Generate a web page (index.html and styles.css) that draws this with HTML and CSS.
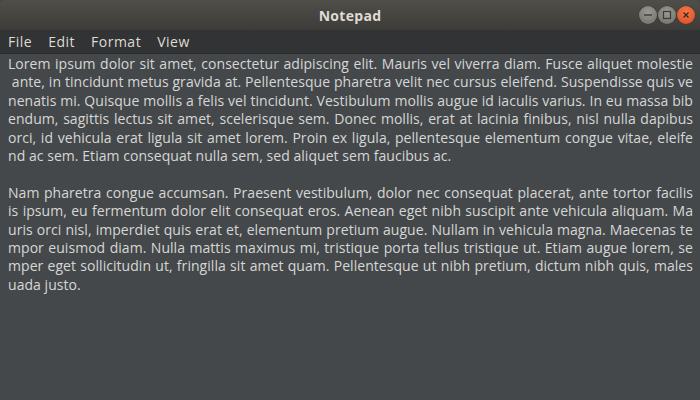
FILE: index.html
```html
<!DOCTYPE html>
<html>
<head>
<meta charset="utf-8">
<link rel="stylesheet" href="styles.css">
</head>
<body>
<div class="window">
  <div class="titlebar">
    <div class="title">Notepad</div>
    <div class="controls">
      <span class="btn btn-min"><svg width="18" height="18" viewBox="0 0 18 18"><line x1="5" y1="9" x2="13" y2="9" stroke="#3a3a38" stroke-width="1.4"/></svg></span>
      <span class="btn btn-max"><svg width="18" height="18" viewBox="0 0 18 18"><rect x="5.5" y="5.5" width="7" height="7" fill="none" stroke="#3a3a38" stroke-width="1.2"/></svg></span>
      <span class="btn btn-close"><svg width="18" height="18" viewBox="0 0 18 18"><path d="M6.5 6.5 L11.5 11.5 M11.5 6.5 L6.5 11.5" stroke="#3a2a22" stroke-width="1.4"/></svg></span>
    </div>
  </div>
  <div class="menubar">
    <span class="menu">File</span>
    <span class="menu">Edit</span>
    <span class="menu">Format</span>
    <span class="menu">View</span>
  </div>
  <div class="editor">
    <div class="line">Lorem ipsum dolor sit amet, consectetur adipiscing elit. Mauris vel viverra diam. Fusce aliquet molestie</div>
    <div class="line">&nbsp;ante, in tincidunt metus gravida at. Pellentesque pharetra velit nec cursus eleifend. Suspendisse quis ve</div>
    <div class="line">nenatis mi. Quisque mollis a felis vel tincidunt. Vestibulum mollis augue id iaculis varius. In eu massa bib</div>
    <div class="line">endum, sagittis lectus sit amet, scelerisque sem. Donec mollis, erat at lacinia finibus, nisl nulla dapibus</div>
    <div class="line">orci, id vehicula erat ligula sit amet lorem. Proin ex ligula, pellentesque elementum congue vitae, eleife</div>
    <div class="line last">nd ac sem. Etiam consequat nulla sem, sed aliquet sem faucibus ac.</div>
    <div class="line last">&nbsp;</div>
    <div class="line">Nam pharetra congue accumsan. Praesent vestibulum, dolor nec consequat placerat, ante tortor facilis</div>
    <div class="line">is ipsum, eu fermentum dolor elit consequat eros. Aenean eget nibh suscipit ante vehicula aliquam. Ma</div>
    <div class="line">uris orci nisl, imperdiet quis erat et, elementum pretium augue. Nullam in vehicula magna. Maecenas te</div>
    <div class="line">mpor euismod diam. Nulla mattis maximus mi, tristique porta tellus tristique ut. Etiam augue lorem, se</div>
    <div class="line">mper eget sollicitudin ut, fringilla sit amet quam. Pellentesque ut nibh pretium, dictum nibh quis, males</div>
    <div class="line last">uada justo.</div>
  </div>
</div>
</body>
</html>
```

FILE: styles.css
```css
html, body {
  margin: 0;
  padding: 0;
  width: 700px;
  height: 400px;
  overflow: hidden;
  background: #45484b;
}
.window {
  width: 700px;
  height: 400px;
  display: flex;
  flex-direction: column;
  font-family: "Open Sans", "Noto Sans", sans-serif;
}
.titlebar {
  height: 30px;
  flex: none;
  background: linear-gradient(#4f4e49, #3d3c38);
  border-radius: 5px 5px 0 0;
  display: flex;
  align-items: center;
  justify-content: center;
  position: relative;
}
.title {
  color: #dfdbd2;
  font-weight: bold;
  font-size: 14px;
  letter-spacing: 0.3px;
}
.controls {
  position: absolute;
  right: 5px;
  top: 6px;
  display: flex;
  gap: 1px;
}
.btn {
  width: 18px;
  height: 18px;
  border-radius: 50%;
  display: block;
}
.btn svg { display: block; }
.btn-min, .btn-max {
  background: radial-gradient(circle at 50% 35%, #9a9993, #6e6d68);
  box-shadow: 0 0 0 0.5px #3a3935;
}
.btn-close {
  background: radial-gradient(circle at 50% 35%, #f47a4d, #d9481c);
  box-shadow: 0 0 0 0.5px #3a3935;
}
.menubar {
  height: 23px;
  flex: none;
  background: #323335;
  border-bottom: 1px solid #2a2b2c;
  display: flex;
  align-items: center;
  padding-left: 0;
}
.menu {
  color: #dfdbd2;
  font-size: 14px;
  letter-spacing: 0.5px;
  padding: 0 8px;
}
.editor {
  flex: 1;
  background: #45484b;
  padding: 1px 7px 0 8px;
  color: #d6d7d5;
  font-size: 14px;
  letter-spacing: 0.05px;
  line-height: 18.4px;
}
.line {
  white-space: nowrap;
  text-align: justify;
  text-align-last: justify;
  height: 18.4px;
}
.line.last {
  text-align-last: left;
}
```
